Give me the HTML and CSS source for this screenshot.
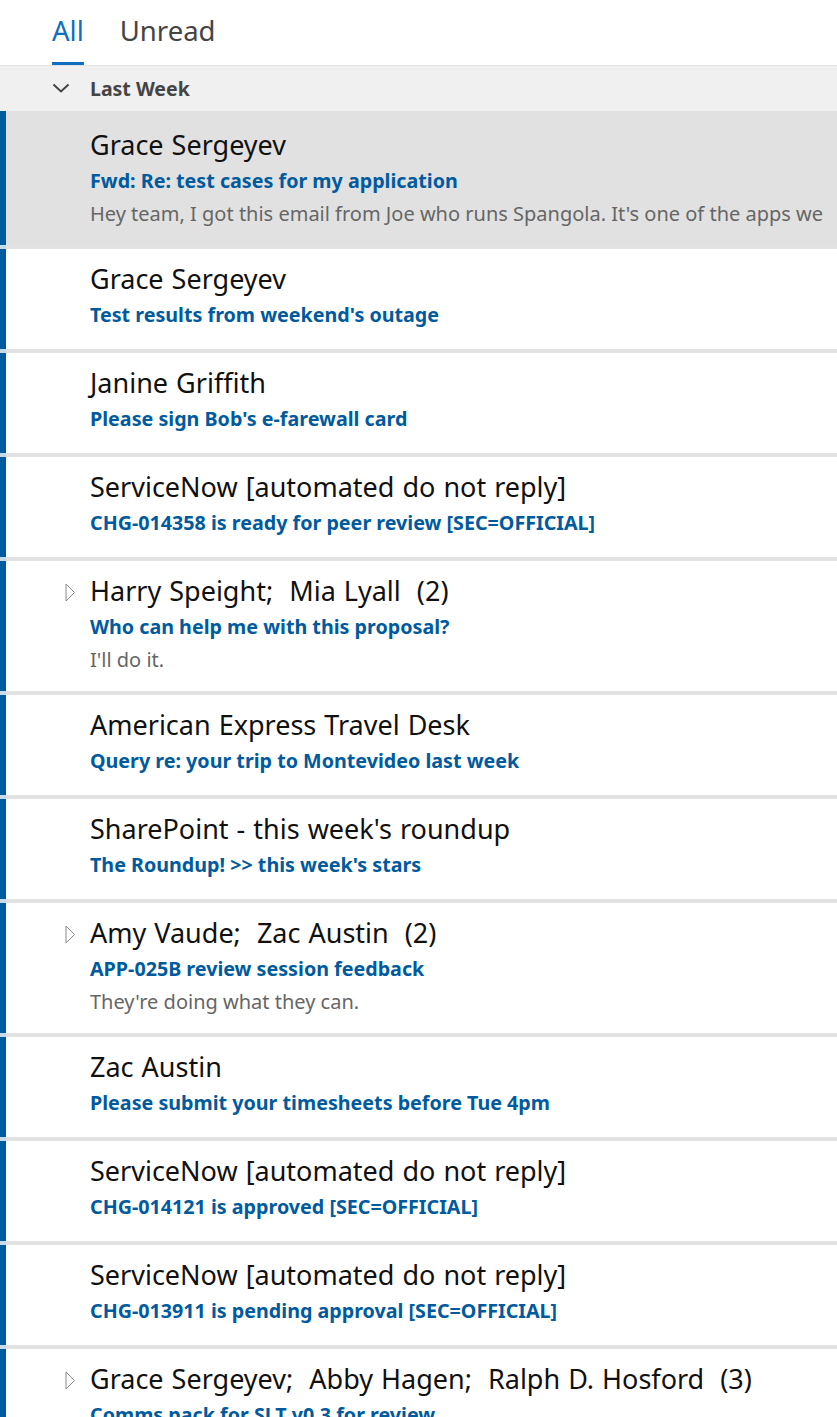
FILE: index.html
```html
<!DOCTYPE html>
<html lang="en">
<head>
<meta charset="utf-8">
<title>Inbox</title>
<link rel="stylesheet" href="styles.css">
</head>
<body>
<div class="pane">
  <nav class="tabs">
    <span class="tab active">All</span>
    <span class="tab">Unread</span>
  </nav>
  <div class="group">
    <svg class="chev" width="18" height="12" viewBox="0 0 18 12"><path d="M1.5 2.5 L9 9.5 L16.5 2.5" fill="none" stroke="#444" stroke-width="2"/></svg>
    <span class="group-title">Last Week</span>
  </div>
  <ul class="list">
    <li class="item selected first">
      <div class="name">Grace Sergeyev</div>
      <div class="subject">Fwd: Re: test cases for my application</div>
      <div class="preview">Hey team, I got this email from Joe who runs Spangola. It's one of the apps we</div>
    </li>
    <li class="item">
      <div class="name">Grace Sergeyev</div>
      <div class="subject">Test results from weekend's outage</div>
    </li>
    <li class="item">
      <div class="name">Janine Griffith</div>
      <div class="subject">Please sign Bob's e-farewall card</div>
    </li>
    <li class="item">
      <div class="name">ServiceNow [automated do not reply]</div>
      <div class="subject">CHG-014358 is ready for peer review [SEC=OFFICIAL]</div>
    </li>
    <li class="item">
      <div class="name"><svg class="expand" width="11" height="19" viewBox="0 0 11 19"><path d="M1 1 L9.5 9.5 L1 18 Z" fill="none" stroke="#8a8a8a" stroke-width="1"/></svg>Harry Speight;&nbsp; Mia Lyall&nbsp; (2)</div>
      <div class="subject">Who can help me with this proposal?</div>
      <div class="preview">I'll do it.</div>
    </li>
    <li class="item">
      <div class="name">American Express Travel Desk</div>
      <div class="subject">Query re: your trip to Montevideo last week</div>
    </li>
    <li class="item">
      <div class="name">SharePoint - this week's roundup</div>
      <div class="subject">The Roundup! &gt;&gt; this week's stars</div>
    </li>
    <li class="item">
      <div class="name"><svg class="expand" width="11" height="19" viewBox="0 0 11 19"><path d="M1 1 L9.5 9.5 L1 18 Z" fill="none" stroke="#8a8a8a" stroke-width="1"/></svg>Amy Vaude;&nbsp; Zac Austin&nbsp; (2)</div>
      <div class="subject">APP-025B review session feedback</div>
      <div class="preview">They're doing what they can.</div>
    </li>
    <li class="item">
      <div class="name">Zac Austin</div>
      <div class="subject">Please submit your timesheets before Tue 4pm</div>
    </li>
    <li class="item">
      <div class="name">ServiceNow [automated do not reply]</div>
      <div class="subject">CHG-014121 is approved [SEC=OFFICIAL]</div>
    </li>
    <li class="item">
      <div class="name">ServiceNow [automated do not reply]</div>
      <div class="subject">CHG-013911 is pending approval [SEC=OFFICIAL]</div>
    </li>
    <li class="item">
      <div class="name"><svg class="expand" width="11" height="19" viewBox="0 0 11 19"><path d="M1 1 L9.5 9.5 L1 18 Z" fill="none" stroke="#8a8a8a" stroke-width="1"/></svg>Grace Sergeyev;&nbsp; Abby Hagen;&nbsp; Ralph D. Hosford&nbsp; (3)</div>
      <div class="subject">Comms pack for SLT v0.3 for review</div>
      <div class="preview">Please see attached.</div>
    </li>
  </ul>
</div>
</body>
</html>
```

FILE: styles.css
```css
* { box-sizing: border-box; }
html, body { margin: 0; padding: 0; background: #fff; }
body {
  font-family: "Noto Sans", "Open Sans", sans-serif;
  width: 837px;
  height: 1417px;
  overflow: hidden;
}
.pane { width: 837px; }
.tabs {
  display: flex;
  gap: 36px;
  padding-left: 52px;
  height: 66px;
  border-bottom: 1px solid #e3e3e3;
  align-items: stretch;
}
.tab {
  font-size: 27.5px;
  color: #444;
  line-height: 62px;
  border-bottom: 3px solid transparent;
}
.tab.active {
  color: #106ebe;
  border-bottom-color: #106ebe;
}
.group {
  display: flex;
  align-items: center;
  height: 45px;
  background: #f0f0f0;
  padding-left: 52px;
}
.chev { margin-right: 20px; margin-top: -2px; }
.group-title {
  font-weight: 700;
  font-size: 19.5px;
  color: #444;
}
.list {
  list-style: none;
  margin: 0;
  padding: 0;
  display: flex;
  flex-direction: column;
  gap: 4px;
  background: linear-gradient(to right, #c4dbef 6px, #e2e2e2 6px);
}
.item {
  background: #fff;
  border-left: 6px solid #005a9e;
  padding: 12px 0 17px 84px;
  white-space: nowrap;
  overflow: hidden;
}
.item.first { padding-top: 16px; }
.item.selected { background: #e1e1e1; }
.name {
  position: relative;
  font-size: 27px;
  line-height: 36px;
  color: #111;
  word-spacing: 1px;
}
.expand {
  position: absolute;
  left: -25px;
  top: 10px;
}
.subject {
  font-size: 19.7px;
  font-weight: 700;
  line-height: 35px;
  color: #005a9e;
}
.preview {
  font-size: 20px;
  line-height: 32px;
  color: #666;
  margin-bottom: -2px;
}
```
